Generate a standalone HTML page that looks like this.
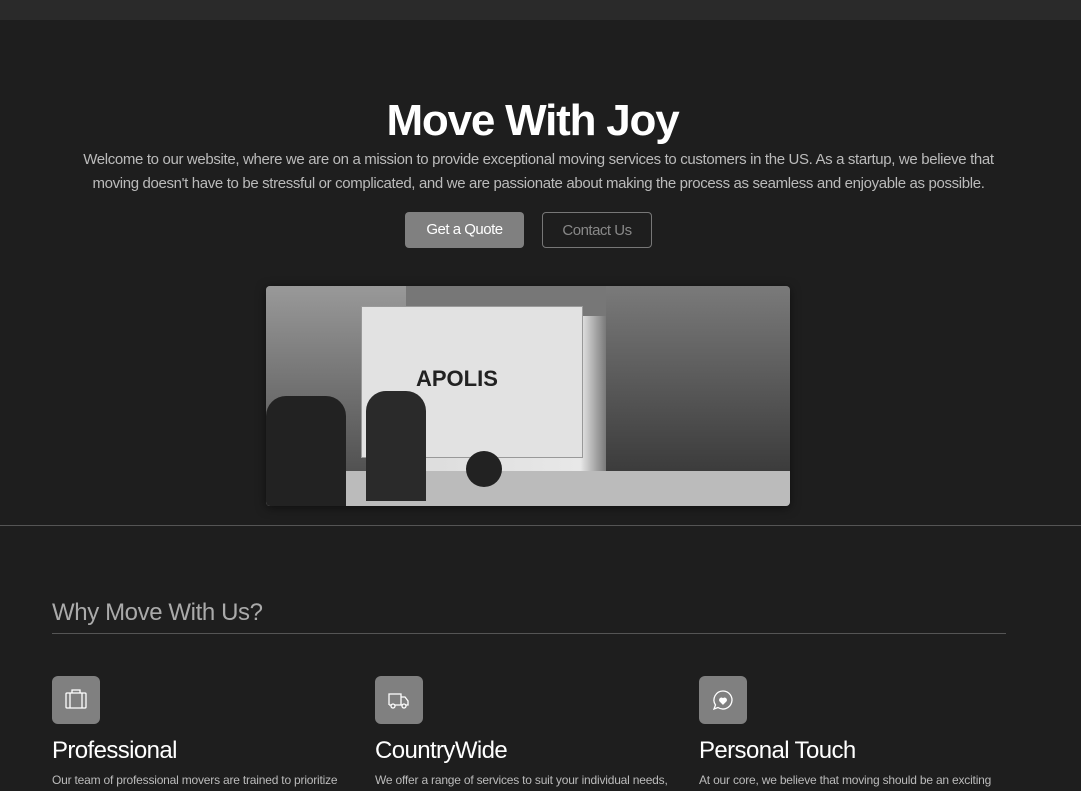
<!DOCTYPE html>
<html><head><meta charset="utf-8"><style>
body{margin:0;width:1081px;height:791px;overflow:hidden;background:#1e1e1e;font-family:"Liberation Sans",sans-serif;color:#fff;position:relative}
.nav{position:absolute;top:0;left:0;width:1081px;height:20px;background:#2a2a2a}
.abs{position:absolute;white-space:nowrap}
h1{position:absolute;top:96px;left:-8px;width:1081px;text-align:center;margin:0;font-size:44px;font-weight:bold;letter-spacing:-1.2px}
.p{position:absolute;top:148px;left:-2px;width:1081px;text-align:center;font-size:15px;line-height:24px;color:#bbb;letter-spacing:-0.35px}
.btn{position:absolute;top:212px;height:36px;border-radius:4px;font-size:15px;line-height:36px;text-align:center;letter-spacing:-0.5px;box-sizing:border-box}
.img{position:absolute;left:266px;top:286px;width:524px;height:220px;border-radius:4px;overflow:hidden;background:linear-gradient(90deg,#666 0%,#9a9a9a 20%,#ddd 30%,#e8e8e8 60%,#777 65%,#555 80%,#444 100%);box-shadow:0 2px 10px rgba(0,0,0,.5)}
.ic{position:absolute;top:676px;width:48px;height:48px;border-radius:6px;background:#808080}
.h3{position:absolute;top:737px;font-size:24px;letter-spacing:-0.6px}
.t{position:absolute;top:773px;font-size:12px;color:#bbb;letter-spacing:-0.2px;white-space:nowrap}
</style></head><body>
<div class="nav"></div>
<h1>Move With Joy</h1>
<div class="p">Welcome to our website, where we are on a mission to provide exceptional moving services to customers in the US. As a startup, we believe that<br>moving doesn't have to be stressful or complicated, and we are passionate about making the process as seamless and enjoyable as possible.</div>
<div class="btn" style="left:405px;width:119px;background:#808080;color:#fff">Get a Quote</div>
<div class="btn" style="left:542px;width:110px;border:1px solid #777;color:#888">Contact Us</div>
<div class="img">
<div style="position:absolute;left:0;top:0;width:140px;height:220px;background:linear-gradient(180deg,#999,#444)"></div>
<div style="position:absolute;left:140px;top:0;width:200px;height:30px;background:#777"></div>
<div style="position:absolute;left:95px;top:20px;width:220px;height:150px;background:#e2e2e2;border:1px solid #999"></div>
<div style="position:absolute;left:150px;top:80px;font-size:22px;color:#222;font-weight:bold">APOLIS</div>
<div style="position:absolute;left:340px;top:0;width:184px;height:190px;background:linear-gradient(180deg,#7a7a7a,#3a3a3a)"></div>
<div style="position:absolute;left:0;top:185px;width:524px;height:35px;background:#bbb"></div>
<div style="position:absolute;left:200px;top:165px;width:36px;height:36px;border-radius:50%;background:#222"></div>
<div style="position:absolute;left:0;top:110px;width:80px;height:110px;background:#222;border-radius:20px 20px 0 0"></div>
<div style="position:absolute;left:100px;top:105px;width:60px;height:110px;background:#2a2a2a;border-radius:20px 20px 0 0"></div>
</div>
<div style="position:absolute;left:0;top:525px;width:1081px;height:1px;background:#555"></div>
<div class="abs" style="left:52px;top:599px;font-size:24px;color:#aaa;letter-spacing:-0.4px">Why Move With Us?</div>
<div style="position:absolute;left:52px;top:633px;width:954px;height:1px;background:#555"></div>
<div class="ic" style="left:52px"><svg width="48" height="48" viewBox="0 0 48 48" fill="none" stroke="#fff" stroke-width="1.3"><rect x="14" y="17" width="20" height="15" rx="1"/><path d="M20 17v-3h8v3M18 17v15M30 17v15"/></svg></div>
<div class="ic" style="left:375px"><svg width="48" height="48" viewBox="0 0 48 48" fill="none" stroke="#fff" stroke-width="1.3"><path d="M14 29V18h12v11M26 21h4l3 4v4h-2M14 29h2M20 29h7"/><circle cx="18" cy="30" r="2"/><circle cx="29" cy="30" r="2"/></svg></div>
<div class="ic" style="left:699px"><svg width="48" height="48" viewBox="0 0 48 48" fill="none" stroke="#fff" stroke-width="1.3"><path d="M24 15a9 9 0 1 1-5 16.5L15 33l1.5-4A9 9 0 0 1 24 15z"/><path d="M24 28l-3-3a1.8 1.8 0 0 1 3-2a1.8 1.8 0 0 1 3 2z" fill="#fff"/></svg></div>
<div class="h3" style="left:52px">Professional</div>
<div class="h3" style="left:375px">CountryWide</div>
<div class="h3" style="left:699px">Personal Touch</div>
<div class="t" style="left:52px">Our team of professional movers are trained to prioritize</div>
<div class="t" style="left:375px">We offer a range of services to suit your individual needs,</div>
<div class="t" style="left:699px">At our core, we believe that moving should be an exciting</div>
</body></html>
